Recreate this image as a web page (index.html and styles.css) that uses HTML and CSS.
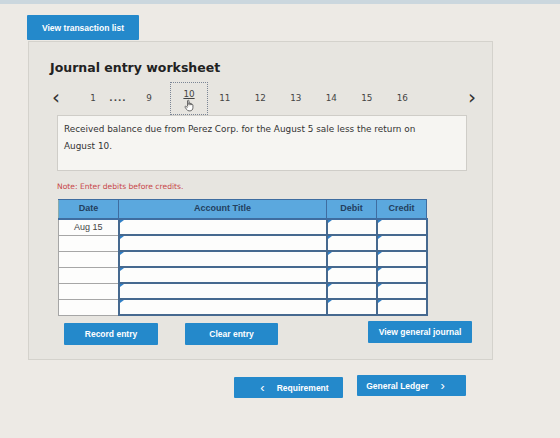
FILE: index.html
```html
<!DOCTYPE html>
<html lang="en">
<head>
  <meta charset="UTF-8" />
  <meta name="viewport" content="width=device-width, initial-scale=1" />
  <title>Journal entry worksheet</title>
  <link rel="stylesheet" href="styles.css">
</head>
<body>
  <div class="topbar"></div>
  <div class="page">
    <button class="btn btn-list">View transaction list</button>

    <div class="panel">
      <h1>Journal entry worksheet</h1>

      <!-- Transaction pager -->
      <div class="pager">
        <span class="arrow prev">&lsaquo;</span>
        <span class="pg pg-1">1</span>
        <span class="pg pg-dots">....</span>
        <span class="pg pg-9">9</span>
        <span class="pg current">
          10
          <svg class="hand" width="11" height="13" viewBox="0 0 10 11">
            <path d="M3.2 6.2V1.3c0-.8 1.3-.8 1.3 0v3.6M4.5 4.5V3.6c0-.7 1.2-.7 1.2 0v1.2M5.7 4.8V4c0-.7 1.2-.7 1.2 0v1M6.9 5.1c0-.7 1.2-.7 1.2 0v2.3c0 1.7-1 3-2.6 3H4.6c-1 0-1.6-.5-2.2-1.3L1 7.1c-.4-.6.3-1.2.8-.8l1.4 1.1" fill="#fff" stroke="#555" stroke-width=".8" stroke-linejoin="round"/>
          </svg>
        </span>
        <span class="pg">11</span>
        <span class="pg">12</span>
        <span class="pg">13</span>
        <span class="pg">14</span>
        <span class="pg">15</span>
        <span class="pg">16</span>
        <span class="arrow next">&rsaquo;</span>
      </div>

      <div class="question">
        Received balance due from Perez Corp. for the August 5 sale less the return on August 10.
      </div>

      <p class="note">Note: Enter debits before credits.</p>

      <table class="journal">
        <thead>
          <tr>
            <th class="col-date">Date</th>
            <th class="col-title">Account Title</th>
            <th class="col-amt">Debit</th>
            <th class="col-amt">Credit</th>
          </tr>
        </thead>
        <tbody>
          <tr><td class="date">Aug 15</td><td class="entry"></td><td class="entry"></td><td class="entry"></td></tr>
          <tr><td class="date"></td><td class="entry"></td><td class="entry"></td><td class="entry"></td></tr>
          <tr><td class="date"></td><td class="entry"></td><td class="entry"></td><td class="entry"></td></tr>
          <tr><td class="date"></td><td class="entry"></td><td class="entry"></td><td class="entry"></td></tr>
          <tr><td class="date"></td><td class="entry"></td><td class="entry"></td><td class="entry"></td></tr>
          <tr><td class="date"></td><td class="entry"></td><td class="entry"></td><td class="entry"></td></tr>
        </tbody>
      </table>

      <div class="actions">
        <button class="btn btn-record">Record entry</button>
        <button class="btn btn-clear">Clear entry</button>
        <button class="btn btn-journal">View general journal</button>
      </div>
    </div>

    <div class="nav">
      <button class="btn btn-nav btn-req"><span class="chev">&lsaquo;</span>Requirement</button>
      <button class="btn btn-nav btn-ledger">General Ledger<span class="chev">&rsaquo;</span></button>
    </div>
  </div>
</body>
</html>
```

FILE: styles.css
```css
body {
  margin: 0;
  background: #edeae5;
  font-family: "DejaVu Sans", Verdana, sans-serif;
  color: #333;
}
.topbar {
  height: 4px;
  background: #cbd7de;
}
.page {
  padding: 11px 0 0 27px;
}
.btn {
  display: block;
  border: none;
  border-radius: 1px;
  background: #2489cb;
  color: #fff;
  font-family: "Liberation Sans", Arial, sans-serif;
  font-weight: bold;
  font-size: 8.5px;
  padding: 0;
  cursor: pointer;
}
.btn-list {
  width: 112px;
  height: 25px;
}

/* Worksheet panel */
.panel {
  width: 465px;
  height: 319px;
  margin-top: 1px;
  margin-left: 1px;
  background: #e7e5e0;
  border: 1px solid #d4d2cc;
  box-sizing: border-box;
  padding: 18px 0 0 21px;
}
.panel h1 {
  margin: 0;
  font-size: 12.5px;
  font-weight: bold;
  color: #222;
}
.pager {
  display: flex;
  align-items: center;
  height: 34px;
  margin-top: 6px;
  font-size: 8.8px;
  color: #444;
}
.pager .arrow {
  font-size: 20px;
  color: #333;
  line-height: 1;
  margin-top: -3px;
}
.pager .prev {
  width: 14px;
  margin-left: 2px;
}
.pager .pg {
  width: 35.5px;
  text-align: center;
}
.pager .pg-1 {
  width: 20px;
  margin-left: 17px;
}
.pager .pg-dots {
  width: 20px;
  margin-left: 5px;
  letter-spacing: 1px;
  font-weight: bold;
}
.pager .pg-9 {
  width: 20px;
  margin-left: 11px;
}
.pager .current {
  width: 38px;
  height: 33px;
  margin-left: 11px;
  box-sizing: border-box;
  border: 1px dotted #7b8595;
  padding-top: 6px;
  position: relative;
  text-decoration: underline;
}
.pager .current + .pg {
  margin-left: -1px;
}
.hand {
  position: absolute;
  left: 13px;
  top: 16px;
}
.pager .next {
  margin-left: 48px;
}

.question {
  width: 410px;
  height: 56px;
  margin: 0 0 0 7px;
  box-sizing: border-box;
  background: #f6f5f2;
  border: 1px solid #cfcdc8;
  padding: 5px 40px 5px 6px;
  font-size: 8.9px;
  line-height: 17px;
  color: #333;
}
.note {
  margin: 11px 0 0 7px;
  font-size: 7.6px;
  color: #c8484a;
}

/* Journal grid */
.journal {
  margin: 8px 0 0 8px;
  border-collapse: collapse;
  font-family: "Liberation Sans", Arial, sans-serif;
  font-size: 9px;
}
.journal th {
  height: 16px;
  padding: 0 0 2px;
  background: #5ba8de;
  color: #23405e;
  font-weight: bold;
  border: 1px solid #3f6da0;
  border-bottom: 2px solid #3f6da0;
}
.journal .col-date { width: 59px; border-left-color: #8aa; }
.journal .col-title { width: 207px; }
.journal .col-amt { width: 49px; }
.journal td {
  height: 14px;
  padding: 0;
  background: #fdfdfc;
}
.journal td.date {
  border: 1px solid #a6a6a6;
  text-align: center;
  color: #444;
}
.journal td.entry {
  border: 2px solid #46698f;
  position: relative;
}
.journal td.entry::before {
  content: "";
  position: absolute;
  left: 0;
  top: 0;
  border-left: 4px solid #2f7fc6;
  border-bottom: 3px solid transparent;
}

.actions {
  display: flex;
  align-items: center;
  margin: 7px 0 0 14px;
}
.actions .btn {
  height: 22px;
}
.btn-record { width: 94px; }
.btn-clear { width: 93px; margin-left: 27px; }
.btn-journal { width: 104px; margin-left: 90px; margin-top: -4px; }

.nav {
  display: flex;
  margin: 17px 0 0 207px;
}
.btn-nav {
  height: 21px;
  width: 109px;
  font-size: 8.5px;
}
.btn-ledger {
  margin-left: 14px;
  margin-top: -2px;
}
.chev {
  font-size: 13px;
  font-weight: normal;
  vertical-align: -1px;
  margin: 0 12px;
}
```
